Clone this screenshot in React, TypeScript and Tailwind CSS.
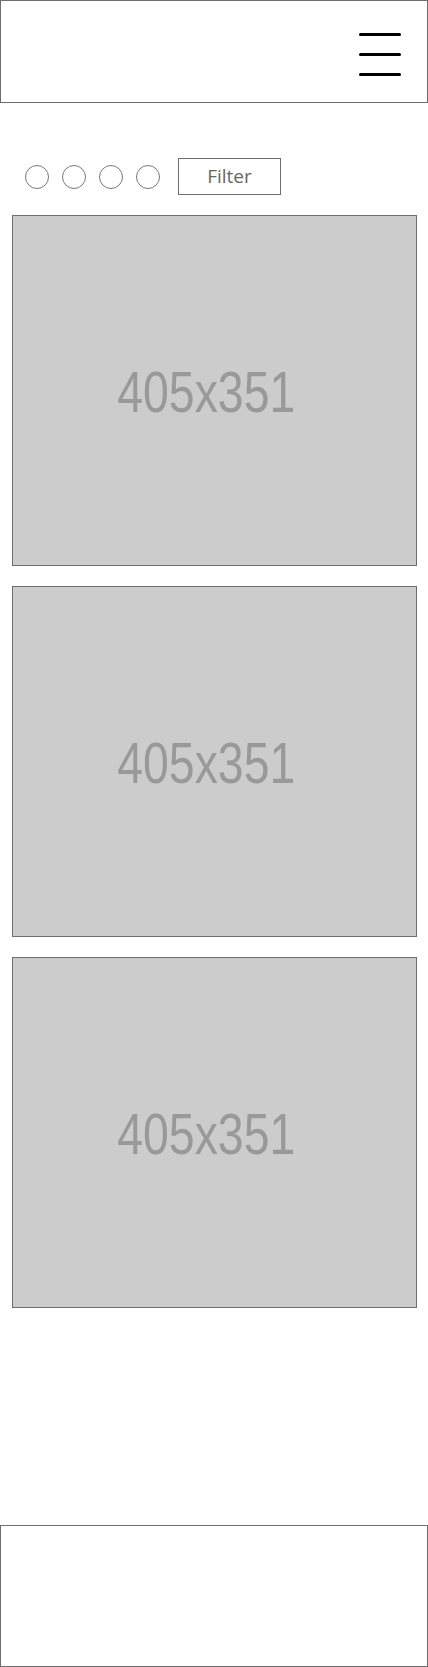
import React from "react";

function Card() {
  return (
    <div className="w-[405px] h-[351px] border border-[#6e6e6e] bg-[#cccccc] flex items-center justify-center overflow-hidden">
      <span
        className="text-[58px] leading-none text-[#999999] scale-x-[0.8] pt-[2px] mr-[17px]"
        style={{ fontFamily: '"Liberation Sans", Arial, sans-serif' }}
      >
        405x351
      </span>
    </div>
  );
}

export default function App() {
  return (
    <div className="w-[428px] h-[1667px] bg-white flex flex-col">
      <header className="h-[103px] border border-[#6e6e6e] flex justify-end pr-[26px] pt-[32px]">
        <div className="flex flex-col gap-[17px]">
          <div className="w-[42px] h-[3px] rounded-full bg-black" />
          <div className="w-[42px] h-[3px] rounded-full bg-black" />
          <div className="w-[42px] h-[3px] rounded-full bg-black" />
        </div>
      </header>

      <div className="mt-[55px] flex items-center pl-[25px] h-[37px]">
        <div className="flex gap-[13px]">
          <div className="w-[24px] h-[24px] rounded-full border border-[#777777]" />
          <div className="w-[24px] h-[24px] rounded-full border border-[#777777]" />
          <div className="w-[24px] h-[24px] rounded-full border border-[#777777]" />
          <div className="w-[24px] h-[24px] rounded-full border border-[#777777]" />
        </div>
        <div
          className="ml-[18px] w-[103px] h-[37px] border border-[#6e6e6e] flex items-center justify-center text-[19px] text-[#666666]"
          style={{ fontFamily: '"Open Sans", "Noto Sans", sans-serif' }}
        >
          Filter
        </div>
      </div>

      <div className="mt-[20px] pl-[12px] flex flex-col gap-[20px]">
        <Card />
        <Card />
        <Card />
      </div>

      <div className="flex-1" />

      <footer className="h-[142px] border border-[#6e6e6e]" />
    </div>
  );
}
